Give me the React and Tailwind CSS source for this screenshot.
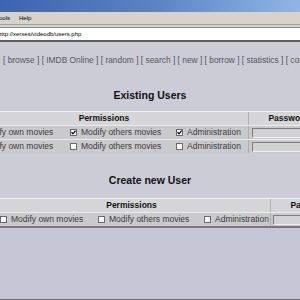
import React from 'react';

const Box = ({ checked }) => (
    <svg width="7" height="7" viewBox="0 0 7 7" className="shrink-0">
        <rect x="0.5" y="0.5" width="6" height="6" fill="#ffffff" stroke="#6b6b6b" />
        {checked && <path d="M1.5 3.2 L3 4.8 L5.6 1.6" stroke="#111" strokeWidth="1.3" fill="none" />}
    </svg>
);

const Perm = ({ checked, label, className }) => (
    <div className={`flex items-center gap-[4px] ${className}`}>
        <Box checked={checked} />
        <span className="whitespace-nowrap">{label}</span>
    </div>
);

const Input = () => (
    <div className="h-[10px] w-[90px] bg-[#d2d2d4] border border-t-[#7c7c7c] border-l-[#7c7c7c] border-r-[#eeeeee] border-b-[#eeeeee]" />
);

const navItems = ['browse', 'IMDB Online', 'random', 'search', 'new', 'borrow', 'statistics', 'contrib'];

export default function App() {
    return (
        <div className="w-[300px] h-[300px] overflow-hidden bg-[#c9cad5] font-['Liberation_Sans',Arial,sans-serif]">
            <div className="h-[12px] bg-gradient-to-r from-[#3d64ae] via-[#5a82c4] to-[#90b6e6]" />
            <div className="h-[12px] bg-[#d6d3ce] flex items-center gap-[9px] text-[6px] text-black -ml-[4px]">
                <span>Tools</span>
                <span>Help</span>
            </div>
            <div className="h-[3px] bg-[#d6d3ce] border-t border-[#a5a29c]" />
            <div className="h-[13px] bg-white flex items-center text-[6px] text-black -ml-[2px] border-t border-[#8c8a85]">
                http://xerxes/videodb/users.php
            </div>
            <div className="h-[2px] bg-[#5e5e62]" />

            <div className="bg-[#cbccd6]">
                <div className="pt-[13px] h-[34px] whitespace-nowrap text-[8.4px] leading-[10px] text-[#55565e] pl-[3px]">
                    {navItems.map(n => (
                        <span key={n}>[ {n} ] </span>
                    ))}
                </div>

                <div className="h-[35px] flex items-center justify-center pt-[4px] text-[10.5px] font-bold text-[#111]">
                    Existing Users
                </div>

                <div className="-ml-[40px] w-[400px] text-[8.5px] text-[#3a3a3e]">
                    <div className="flex h-[14px] bg-[#d6d6d9] border-t border-[#f0f0f0] font-bold text-[#111]">
                        <div className="w-[288px] flex items-center justify-center">Permissions</div>
                        <div className="w-[1px] bg-[#aeaeb2]" />
                        <div className="w-[79px] flex items-center justify-center">Password</div>
                    </div>
                    {[true, false].map((c, i) => (
                        <div key={i} className="flex h-[14px] bg-[#cacacd] border-t border-[#ececec]">
                            <Perm label="Modify own movies" className="w-[106px] pl-[10px]" />
                            <Perm checked={c} label="Modify others movies" className="w-[106px] pl-[4px]" />
                            <Perm checked={c} label="Administration" className="w-[76px] pl-[4px]" />
                            <div className="w-[1px] bg-[#aeaeb2]" />
                            <div className="flex items-center pl-[3px]">
                                <Input />
                            </div>
                        </div>
                    ))}
                </div>

                <div className="h-[45px] flex items-end justify-center pb-[9px] text-[10.5px] font-bold text-[#111]">
                    Create new User
                </div>

                <div className="-ml-[7px] w-[400px] text-[8.5px] text-[#3a3a3e]">
                    <div className="flex h-[14px] bg-[#d6d6d9] border-t border-[#f0f0f0] font-bold text-[#111]">
                        <div className="w-[277px] flex items-center justify-center">Permissions</div>
                        <div className="w-[1px] bg-[#aeaeb2]" />
                        <div className="w-[79px] flex items-center justify-center">Password</div>
                    </div>
                    <div className="flex h-[14px] bg-[#cacacd] border-t border-[#ececec]">
                        <Perm label="Modify own movies" className="w-[101px] pl-[7px]" />
                        <Perm label="Modify others movies" className="w-[106px] pl-[4px]" />
                        <Perm label="Administration" className="w-[70px] pl-[4px]" />
                        <div className="w-[1px] bg-[#aeaeb2]" />
                        <div className="flex items-center pl-[2px]">
                            <Input />
                        </div>
                    </div>
                </div>

                <div className="h-[2px] bg-[#77777c]" />
                <div className="h-[71px] bg-[#c6c7d4]" />
                <div className="h-[2px] bg-[#6e6e72]" />
            </div>
        </div>
    );
}
